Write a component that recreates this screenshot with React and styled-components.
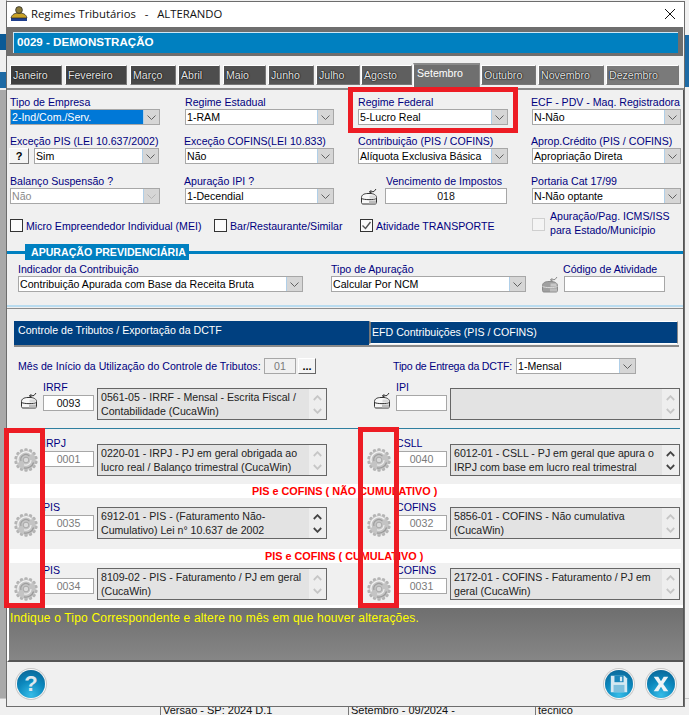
import React from 'react';
import styled, { createGlobalStyle, css } from 'styled-components';

const Global = createGlobalStyle`
  html, body { margin: 0; padding: 0; background: #f0f0f0; }
  #root { width: 689px; height: 715px; overflow: hidden; }
  * { box-sizing: border-box; }
`;

const SANS = '"Liberation Sans", Arial, sans-serif';
const FS = '10.6px';

const Desktop = styled.div`
  position: relative;
  width: 689px;
  height: 715px;
  overflow: hidden;
  background: linear-gradient(to right, #a9a9a9 0 7px, #f0f0f0 7px);
  font-family: ${SANS};
`;
const BackPatch = styled.div`
  position: absolute;
  ${p => p.$right ? 'right: 0;' : 'left: 0;'}
  width: ${p => p.$w || 6}px;
  top: ${p => p.$top}px;
  height: ${p => p.$h}px;
  background: ${p => p.$c || '#0a5a96'};
`;
const StatusBack = styled.div`
  position: absolute;
  left: 0;
  right: 0;
  top: 698px;
  height: 17px;
  background: #f0f0f0;
  border-top: 1px solid #c8c8c8;
  display: grid;
  grid-template-columns: 160px 188px 187px 1fr;
  font-size: 11px;
  color: #111;
`;
const StatusCell = styled.div`
  padding: 5px 0 0 2px;
  border-left: ${p => p.$line ? '1px solid #777' : 'none'};
  line-height: 12px;
  white-space: nowrap;
`;
const Window = styled.div`
  position: relative;
  margin: 1px 0 0 6px;
  width: 679px;
  height: 706px;
  background: #f0f0f0;
  border: 1px solid #6d6d6d;
  display: flex;
  flex-direction: column;
`;
const TitleBar = styled.div`
  height: 25px;
  flex: none;
  background: #fff;
  display: flex;
  align-items: center;
  padding: 0 0 2px 3px;
  font: 11.3px "Open Sans", "Noto Sans", sans-serif;
  color: #111;
  gap: 3px;
  white-space: pre;
`;
const Close = styled.div`
  margin-left: auto;
  margin-right: 8px;
  width: 12px;
  height: 12px;
  display: flex;
`;
const CompanyFrame = styled.div`
  flex: none;
  height: 29px;
  background: #6e6e6e;
  padding: 5px 5px 3px 6px;
  margin-right: 1px;
`;
const CompanyBar = styled.div`
  height: 21px;
  background: #0080c0;
  border-top: 1px solid #cde6f5;
  border-left: 1px solid #cde6f5;
  color: #fff;
  font: bold 11.6px/17px ${SANS};
  padding-left: 3px;
  white-space: nowrap;
`;
const Tabs = styled.div`
  flex: none;
  height: 34px;
  padding: 8px 2px 0 3px;
  display: flex;
  align-items: flex-start;
  background: #f0f0f0;
  border-bottom: 2px solid #8a8a8a;
`;
const Tab = styled.div`
  width: ${p => p.$w}px;
  margin-left: ${p => p.$ml}px;
  height: 20px;
  margin-top: 1px;
  background: ${p => p.$bg};
  border: 1px solid #fff;
  border-right-color: #777;
  border-bottom-color: #777;
  color: #e4e4e4;
  font-size: ${FS};
  line-height: 19px;
  padding-left: 2px;
  text-shadow: 0 0 1px #111, 0 0 1px #111, 0 0 2px #222;
  white-space: nowrap;
  ${p => p.$active && css`
    height: 25px;
    margin-top: -1px;
    background: #6f6f6f;
    border-color: #8a8a8a #8a8a8a #6f6f6f #fff;
    border-top-width: 2px;
    color: #fff;
    text-shadow: none;
    line-height: 17px;
    padding-left: 3px;
  `}
`;
const Body = styled.div`
  position: relative;
  flex: 1;
  display: flex;
  flex-direction: column;
  min-height: 0;
  border-right: 1px solid #555;
`;
const FormGrid = styled.div`
  flex: none;
  padding: 6px 0 0 3px;
  display: grid;
  grid-template-columns: 175px 173px 174px 149px;
  grid-template-rows: 39px 40px 40px;
  height: 122px;
`;
const Cell = styled.div`
  display: flex;
  flex-direction: column;
  min-width: 0;
`;
const Label = styled.label`
  color: #00007f;
  font-size: ${FS};
  line-height: 12px;
  height: 13px;
  flex: none;
  white-space: nowrap;
  margin-left: ${p => p.$ml || 0}px;
  letter-spacing: ${p => p.$tight ? '-.2px' : 'normal'};
`;
const SelectBox = styled.div`
  display: flex;
  width: ${p => p.$w}px;
  height: 16px;
  flex: none;
  border: 1px solid #a7a7a7;
  background: #fff;
  font-size: ${FS};
  line-height: 14px;
  color: #000;
  white-space: nowrap;
  overflow: hidden;
`;
const SelectText = styled.div`
  flex: 1;
  padding-left: 1px;
  min-width: 0;
  ${p => p.$sel && 'background: #0078d7; color: #fff;'}
  ${p => p.$dis && 'color: #8a8a8a;'}
`;
const Drop = styled.div`
  width: 16px;
  flex: none;
  background: #d6d6d6;
  border-left: 1px solid #b0cfe8;
  display: flex;
  align-items: center;
  justify-content: center;
`;
const Chevron = ({ c = '#606060' }) => (
  <svg width="9" height="5" viewBox="0 0 9 5"><path d="M.5.5 4.5 4.5 8.5.5" fill="none" stroke={c} strokeWidth="1" /></svg>
);
const Select = ({ w, text, sel, dis }) => (
  <SelectBox $w={w}>
    <SelectText $sel={sel} $dis={dis}>{text}</SelectText>
    <Drop><Chevron c={dis ? '#b5b5b5' : '#606060'} /></Drop>
  </SelectBox>
);
const InlineRow = styled.div`
  display: flex;
  align-items: flex-start;
  gap: ${p => p.$gap || 0}px;
  margin-left: ${p => p.$ml || 0}px;
`;
const HelpMini = styled.div`
  width: 20px;
  height: 16px;
  background: #f4f4f4;
  border: 1px solid #fff;
  border-right-color: #777;
  border-bottom-color: #777;
  font: bold 11px/14px ${SANS};
  text-align: center;
  color: #000;
`;
const TextInput = styled.div`
  width: ${p => p.$w}px;
  height: 16px;
  flex: none;
  border: 1px solid #a7a7a7;
  background: #fff;
  color: ${p => p.$muted ? '#7a7a7a' : '#111'};
  font-size: ${FS};
  line-height: 14px;
  text-align: center;
`;
const DisabledInput = styled(TextInput)`
  background: #f0f0f0;
`;
const CheckRow = styled.div`
  flex: none;
  height: 32px;
  padding: 7px 0 0 3px;
  display: grid;
  grid-template-columns: 204px 146px 172px 1fr;
`;
const CheckItem = styled.div`
  display: flex;
  align-items: flex-start;
  gap: ${p => p.$gap || 3}px;
  color: #00007f;
  font-size: ${FS};
  line-height: 14px;
  white-space: nowrap;
`;
const Box = styled.div`
  width: 13px;
  height: 13px;
  flex: none;
  border: 1px solid ${p => p.$dim ? '#cfcfcf' : '#333'};
  background: ${p => p.$dim ? '#f4f4f4' : '#fbfbfb'};
  display: flex;
  align-items: center;
  justify-content: center;
  margin-top: ${p => p.$mt || 0}px;
`;
const TwoLines = styled.span`
  margin-top: -10px;
`;
const SectionRule = styled.div`
  flex: none;
  height: 16px;
  background: linear-gradient(#0000 7px, #0080c0 7px 10px, #0000 10px);
  padding-left: 18px;
`;
const SectionBadge = styled.div`
  background: #0080c0;
  color: #fff;
  font: bold 10.6px/16px ${SANS};
  width: 164px;
  height: 16px;
  padding-left: 6px;
  white-space: nowrap;
`;
const PrevRow = styled.div`
  flex: none;
  height: 45px;
  padding: 3px 0 0 11px;
  display: grid;
  grid-template-columns: 313px 210px 1fr;
`;
const PrevDivider = styled.div`
  flex: none;
  height: 3px;
  background: #b9dcf0;
  border-bottom: 1px solid #f0f0f0;
`;
const GrayLine = styled.div`
  flex: none;
  height: 1px;
  background: #8d8d8d;
`;
const LowerTabs = styled.div`
  flex: none;
  margin: 12px 0 0 7px;
  height: 26px;
  width: 665px;
  display: flex;
  border-bottom: 2px solid #8a8a8a;
`;
const LowerTab = styled.div`
  width: ${p => p.$w}px;
  height: 24px;
  background: #004080;
  color: #fff;
  font-size: ${FS};
  padding-left: ${p => p.$pad}px;
  line-height: 18px;
  white-space: nowrap;
  ${p => p.$boxed && css`
    height: 23px;
    border-top: 1px solid #fff;
    border-bottom: 1px solid #fff;
    border-left: 2px solid #777;
    border-right: 1px solid #888;
    line-height: 20px;
  `}
`;
const DctfRow = styled.div`
  flex: none;
  height: 41px;
  padding: 11px 0 0 11px;
  display: grid;
  grid-template-columns: 246px 34px 95px 123px 1fr;
  align-items: start;
`;
const DctfLabel = styled(Label)`
  margin-top: 2px;
`;
const MiniButton = styled.div`
  width: 18px;
  height: 16px;
  background: #f4f4f4;
  border: 1px solid #fff;
  border-right-color: #666;
  border-bottom-color: #666;
  font: bold 11px/14px ${SANS};
  color: #000;
  text-align: center;
`;
const TaxGrid = styled.div`
  flex: none;
  display: grid;
  grid-template-columns: 353px 1fr;
  padding-left: 13px;
`;
const TaxCell = styled.div`
  display: grid;
  grid-template-columns: 23px 54px 1fr;
  height: 32px;
  align-items: start;
`;
const IconSlot = styled.div`
  margin-top: ${p => p.$top}px;
  margin-left: ${p => p.$ml || 0}px;
  display: flex;
`;
const CodeCol = styled.div`
  display: flex;
  flex-direction: column;
  margin-top: ${p => p.$mt}px;
`;
const TaxLabel = styled(Label)`
  margin-bottom: 1px;
`;
const Memo = styled.div`
  height: 32px;
  width: 230px;
  border: 1px solid #666;
  background: #e3e3e3;
  display: flex;
  font-size: ${FS};
  line-height: 14px;
  color: #222;
`;
const MemoText = styled.div`
  flex: 1;
  padding: 1px 0 0 3px;
  white-space: pre-line;
  min-width: 0;
`;
const MemoScroll = styled.div`
  width: 17px;
  flex: none;
  background: #eeeeee;
  display: flex;
  flex-direction: column;
  justify-content: space-between;
  align-items: center;
  padding: 6px 0 5px;
`;
const Rule = styled.div`
  flex: none;
  height: 1px;
  margin: 8px 0 15px 11px;
  background: #2f7f9f;
  width: 662px;
`;
const WhiteBand = styled.div`
  flex: none;
  height: 14px;
  margin: ${p => p.$mt}px 0 ${p => p.$mb}px 3px;
  width: 671px;
  background: #fff;
  color: #ff0000;
  font: bold 10.85px/14px ${SANS};
  padding-left: ${p => p.$pad}px;
  white-space: nowrap;
`;
const Spacer = styled.div`
  flex: none;
  height: ${p => p.$h}px;
  background: ${p => p.$c || 'transparent'};
`;
const HintPanel = styled.div`
  flex: none;
  height: 54px;
  background: linear-gradient(#6f6f6f, #868686);
  border-left: 2px solid #fff;
  border-bottom: 2px solid #555;
  color: #ffff00;
  font-size: 12px;
  padding: 3px 0 0 1px;
  letter-spacing: .18px;
  white-space: nowrap;
  line-height: 14px;
`;
const Footer = styled.div`
  flex: 1;
  display: flex;
  align-items: center;
  padding: 0 8px 0 10px;
  gap: 14px;
  background: #f0f0f0;
`;
const RoundBtn = styled.div`
  width: 28px;
  height: 28px;
  border-radius: 50%;
  flex: none;
  box-shadow: 0 0 0 1px #fafafa, 0 0 0 2px #c9c9c9;
  background: radial-gradient(circle at 50% 90%, #35bce8 0, #0c88bd 50%, #0a5f8f 100%);
  margin-left: ${p => p.$auto ? 'auto' : '0'};
  display: flex;
  align-items: center;
  justify-content: center;
  overflow: hidden;
  font: bold 22px/28px ${SANS};
  color: #dfe8ee;
`;
const Annotation = styled.div`
  position: absolute;
  left: ${p => p.$x}px;
  top: ${p => p.$y}px;
  width: ${p => p.$w}px;
  height: ${p => p.$h}px;
  border: 5px solid #ed1c24;
  pointer-events: none;
`;

const Gear = () => (
  <svg width="24" height="24" viewBox="0 0 24 24">
    <g transform="translate(12 12)">
      {Array.from({ length: 14 }).map((_, i) => (
        <rect key={i} x="-1.7" y="-11.8" width="3.4" height="5" rx="1.2" fill="#b4b4b4" transform={`rotate(${i * 25.7})`} />
      ))}
      <circle r="9.4" fill="#c4c4c4" />
      <path d="M-7.6 2.5A8 8 0 0 1 5.500-5.800" fill="none" stroke="#f2f2f2" strokeWidth="1.400" />
      <path d="M7.600 2.500A8 8 0 0 1-2 7.800" fill="none" stroke="#9a9a9a" strokeWidth="1.300" />
      <path d="M-5 1A5 5 0 0 1 3.500-3.800" fill="none" stroke="#9f9f9f" strokeWidth="1.200" />
      <path d="M5 0A5 5 0 0 1-2 4.700" fill="none" stroke="#ececec" strokeWidth="1.200" />
      <circle r="2.800" fill="#dadada" stroke="#a0a0a0" strokeWidth=".8" />
    </g>
  </svg>
);
const Printer = ({ muted }) => {
  const line = muted ? '#8a8a8a' : '#333';
  return (
    <svg width="18" height="18" viewBox="0 0 18 18">
      <path d="M1.500 9.500C1.500 7 4 5.500 8 5.500h2c3.500 0 6.500 1.500 6.500 4v5c0 1-.7 1.500-1.500 1.500H3c-.8 0-1.500-.5-1.500-1.500z" fill={muted ? '#a0a0a0' : '#f8f8f8'} stroke={line} />
      <path d="M1.500 10.500c3 1.500 12 1.500 15 0" fill="none" stroke={muted ? '#dcdcdc' : line} />
      <rect x="9" y="12.500" width="7" height="3" fill="#bdbdbd" />
      <rect x="9.500" y="7.500" width="6" height="3" fill={muted ? '#c8c8c8' : '#dadada'} />
      <path d="M9.500 4 14 3.500 16 1M9.500 4l2.400 1.400M9.500 4l1.800-1.900" stroke={line} fill="none" />
    </svg>
  );
};
const ScrollArrows = ({ dark }) => {
  const c = dark ? '#444' : '#c6c6c6';
  return (
    <>
      <svg width="9" height="6" viewBox="0 0 9 6"><path d="M.8 5 4.500 1.200 8.200 5" fill="none" stroke={c} strokeWidth="1.800" /></svg>
      <svg width="9" height="6" viewBox="0 0 9 6"><path d="M.8 1 4.500 4.800 8.200 1" fill="none" stroke={c} strokeWidth="1.800" /></svg>
    </>
  );
};

const months = [
  ['Janeiro', 52, '#404040', 0], ['Fevereiro', 62, '#444444', 3], ['Março', 46, '#494949', 3],
  ['Abril', 42, '#4d4d4d', 2], ['Maio', 43, '#515151', 3], ['Junho', 46, '#555555', 2],
  ['Julho', 44, '#5a5a5a', 2], ['Agosto', 51, '#5f5f5f', 1], ['Setembro', 67, '#6f6f6f', 1],
  ['Outubro', 55, '#6d6d6d', 1], ['Novembro', 66, '#727272', 2], ['Dezembro', 73, '#7a7a7a', 2],
];

const Tax = ({ label, code, text, icon, dark, muted, top, mt, ml }) => (
  <TaxCell>
    <IconSlot $top={top} $ml={ml}>{icon}</IconSlot>
    <CodeCol $mt={mt}>
      <TaxLabel>{label}</TaxLabel>
      <TextInput $w={51} $muted={muted}>{code}</TextInput>
    </CodeCol>
    <Memo>
      <MemoText>{text}</MemoText>
      <MemoScroll><ScrollArrows dark={dark} /></MemoScroll>
    </Memo>
  </TaxCell>
);

export default function App() {
  return (
    <Desktop>
      <Global />
      <BackPatch $top={0} $h={90} $c="#f0f0f0" />
      <BackPatch $top={34} $h={16} />
      <BackPatch $top={72} $h={16} $c="#1d6aa5" />
      <BackPatch $right $w={4} $top={35} $h={52} $c="#1d6aa5" />
      <StatusBack>
        <StatusCell />
        <StatusCell $line>Versão - SP: 2024 D.1</StatusCell>
        <StatusCell $line>Setembro - 09/2024 -</StatusCell>
        <StatusCell $line>tecnico</StatusCell>
      </StatusBack>
      <Window>
        <TitleBar>
          <svg width="18" height="18" viewBox="0 0 18 18">
            <rect x="1" y="13" width="16" height="3" fill="#1f3f8f" />
            <path d="M1 13c1-4 4-5 8-5s7 1 8 5z" fill="#c9a227" stroke="#222" strokeWidth=".7" />
            <circle cx="9" cy="5" r="3.400" fill="#8a7a3a" stroke="#222" strokeWidth=".7" />
          </svg>
          <span>{'Regimes Tributários   -   ALTERANDO'}</span>
          <Close>
            <svg width="12" height="12" viewBox="0 0 12 12"><path d="M1 1 11 11M11 1 1 11" stroke="#111" strokeWidth="1" /></svg>
          </Close>
        </TitleBar>
        <CompanyFrame><CompanyBar>0029 - DEMONSTRAÇÃO</CompanyBar></CompanyFrame>
        <Tabs>
          {months.map(([name, w, bg, ml]) => (
            <Tab key={name} $w={w} $bg={bg} $ml={ml} $active={name === 'Setembro'}>{name}</Tab>
          ))}
        </Tabs>
        <Body>
          <FormGrid>
            <Cell><Label>Tipo de Empresa</Label><Select w={150} text="2-Ind/Com./Serv." sel /></Cell>
            <Cell><Label>Regime Estadual</Label><Select w={149} text="1-RAM" /></Cell>
            <Cell><Label>Regime Federal</Label><Select w={150} text="5-Lucro Real" /></Cell>
            <Cell><Label $ml={-1}>ECF - PDV - Maq. Registradora</Label><Select w={149} text="N-Não" /></Cell>

            <Cell>
              <Label>Exceção PIS (LEI 10.637/2002)</Label>
              <InlineRow $gap={5} $ml={-1}><HelpMini>?</HelpMini><Select w={125} text="Sim" /></InlineRow>
            </Cell>
            <Cell><Label $ml={-1}>Exceção COFINS(LEI 10.833)</Label><Select w={149} text="Não" /></Cell>
            <Cell><Label>Contribuição (PIS / COFINS)</Label><Select w={150} text="Alíquota Exclusiva Básica" /></Cell>
            <Cell><Label $ml={-1}>Aprop.Crédito (PIS / COFINS)</Label><Select w={149} text="Apropriação Direta" /></Cell>

            <Cell><Label>Balanço Suspensão ?</Label><Select w={150} text="Não" dis /></Cell>
            <Cell><Label $ml={-1}>Apuração IPI ?</Label><Select w={149} text="1-Decendial" /></Cell>
            <Cell>
              <Label $ml={28}>Vencimento de Impostos</Label>
              <InlineRow $gap={7} $ml={2}><Printer /><TextInput $w={122}>018</TextInput></InlineRow>
            </Cell>
            <Cell><Label $ml={-1}>Portaria Cat 17/99</Label><Select w={149} text="N-Não optante" /></Cell>
          </FormGrid>
          <CheckRow>
            <CheckItem><Box />Micro Empreendedor Individual (MEI)</CheckItem>
            <CheckItem><Box />Bar/Restaurante/Similar</CheckItem>
            <CheckItem>
              <Box>
                <svg width="11" height="11" viewBox="0 0 11 11"><path d="M1.500 5.500 4.500 8.500 9.500 2" fill="none" stroke="#555" strokeWidth="1.400" /></svg>
              </Box>
              Atividade TRANSPORTE
            </CheckItem>
            <CheckItem $gap={5}>
              <Box $dim $mt={-1} />
              <TwoLines>Apuração/Pag. ICMS/ISS<br />para Estado/Município</TwoLines>
            </CheckItem>
          </CheckRow>
          <SectionRule><SectionBadge>APURAÇÃO PREVIDENCIÁRIA</SectionBadge></SectionRule>
          <PrevRow>
            <Cell><Label>Indicador da Contribuição</Label><Select w={285} text="Contribuição Apurada com Base da Receita Bruta" /></Cell>
            <Cell><Label>Tipo de Apuração</Label><Select w={195} text="Calcular Por NCM" /></Cell>
            <Cell>
              <Label $ml={22}>Código de Atividade</Label>
              <InlineRow $gap={5}><Printer muted /><TextInput $w={101} /></InlineRow>
            </Cell>
          </PrevRow>
          <PrevDivider />
          <GrayLine />
          <LowerTabs>
            <LowerTab $w={355} $pad={4}>Controle de Tributos / Exportação da DCTF</LowerTab>
            <LowerTab $w={309} $pad={1} $boxed>EFD Contribuições (PIS / COFINS)</LowerTab>
          </LowerTabs>
          <DctfRow>
            <DctfLabel>Mês de Início da Utilização do Controle de Tributos:</DctfLabel>
            <DisabledInput $w={32} $muted>01</DisabledInput>
            <MiniButton>...</MiniButton>
            <DctfLabel $tight>Tipo de Entrega da DCTF:</DctfLabel>
            <Select w={120} text="1-Mensal" />
          </DctfRow>
          <TaxGrid>
            <Tax label="IRRF" code="0093" icon={<Printer />} top={4} mt={-7} text={'0561-05 - IRRF - Mensal - Escrita Fiscal /\nContabilidade (CucaWin)'} />
            <Tax label="IPI" code="" icon={<Printer />} top={4} mt={-7} text="" />
          </TaxGrid>
          <Rule />
          <TaxGrid>
            <Tax label="IRPJ" code="0001" muted icon={<Gear />} top={4} mt={-7} ml={-6} text={'0220-01 - IRPJ - PJ em geral obrigada ao\nlucro real / Balanço trimestral (CucaWin)'} />
            <Tax label="CSLL" code="0040" muted dark icon={<Gear />} top={4} mt={-7} ml={-6} text={'6012-01 - CSLL - PJ em geral que apura o\nIRPJ com base em lucro real trimestral'} />
          </TaxGrid>
          <WhiteBand $mt={8} $mb={9} $pad={242}>PIS e COFINS ( NÃO CUMULATIVO )</WhiteBand>
          <TaxGrid>
            <Tax label="PIS" code="0035" muted dark icon={<Gear />} top={6} mt={-6} ml={-6} text={'6912-01 - PIS - (Faturamento Não-\nCumulativo) Lei n° 10.637 de 2002'} />
            <Tax label="COFINS" code="0032" muted icon={<Gear />} top={6} mt={-6} ml={-6} text={'5856-01 - COFINS - Não cumulativa\n(CucaWin)'} />
          </TaxGrid>
          <WhiteBand $mt={10} $mb={5} $pad={255}>PIS e COFINS ( CUMULATIVO )</WhiteBand>
          <TaxGrid>
            <Tax label="PIS" code="0034" muted icon={<Gear />} top={9} mt={-4} ml={-6} text={'8109-02 - PIS - Faturamento / PJ em geral\n(CucaWin)'} />
            <Tax label="COFINS" code="0031" muted icon={<Gear />} top={9} mt={-4} ml={-6} text={'2172-01 - COFINS - Faturamento / PJ em\ngeral (CucaWin)'} />
          </TaxGrid>
          <Spacer $h={5} />
          <Spacer $h={3} $c="#fff" />
          <HintPanel>Indique o Tipo Correspondente e altere no mês em que houver alterações.</HintPanel>
          <Footer>
            <RoundBtn>?</RoundBtn>
            <RoundBtn $auto>
              <svg width="20" height="20" viewBox="0 0 22 22">
                <path d="M2 2h15l3 3v15H2z" fill="#d6e9f2" />
                <rect x="6" y="2" width="10" height="7" fill="#1a86ba" />
                <rect x="12" y="3" width="2.500" height="5" fill="#d6e9f2" />
                <rect x="5" y="12" width="12" height="8" fill="#7fc0dd" />
              </svg>
            </RoundBtn>
            <RoundBtn>
              <svg width="20" height="20" viewBox="0 0 22 22"><path d="M3 3h5l3 5 3-5h5l-5.500 8L19 19h-5l-3-5-3 5H3l5.500-8z" fill="#eef4f7" /></svg>
            </RoundBtn>
          </Footer>
        </Body>
      </Window>
      <Annotation $x={348} $y={87} $w={170} $h={46} />
      <Annotation $x={4} $y={428} $w={41} $h={180} />
      <Annotation $x={358} $y={427} $w={41} $h={181} />
    </Desktop>
  );
}
